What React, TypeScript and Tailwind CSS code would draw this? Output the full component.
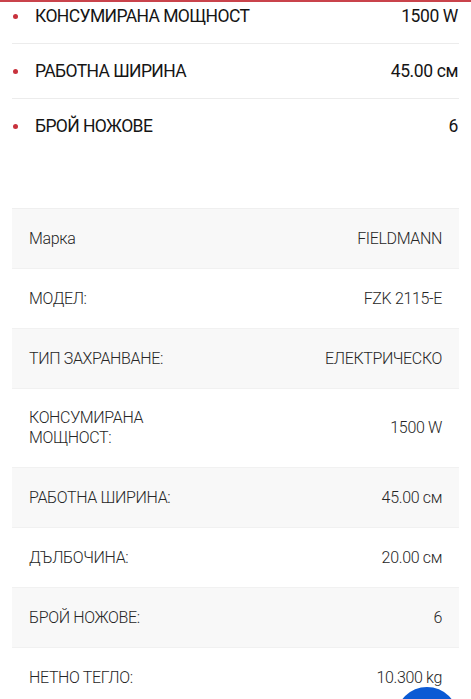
import React from 'react';

const highlights = [
  { label: 'КОНСУМИРАНА МОЩНОСТ', value: '1500 W' },
  { label: 'РАБОТНА ШИРИНА', value: '45.00 см' },
  { label: 'БРОЙ НОЖОВЕ', value: '6' },
];

const specs = [
  { label: 'Марка', value: 'FIELDMANN' },
  { label: 'МОДЕЛ:', value: 'FZK 2115-E' },
  { label: 'ТИП ЗАХРАНВАНЕ:', value: 'ЕЛЕКТРИЧЕСКО' },
  { label: 'КОНСУМИРАНА МОЩНОСТ:', value: '1500 W' },
  { label: 'РАБОТНА ШИРИНА:', value: '45.00 см' },
  { label: 'ДЪЛБОЧИНА:', value: '20.00 см' },
  { label: 'БРОЙ НОЖОВЕ:', value: '6' },
  { label: 'НЕТНО ТЕГЛО:', value: '10.300 kg' },
];

const App: React.FC = () => {
  return (
    <div className="relative h-[699px] overflow-hidden bg-white font-['Roboto',_'Noto_Sans',_sans-serif]">
      {/* header edge */}
      <div className="absolute top-0 left-0 right-0 h-[2px] bg-[#c9434b] z-10" />

      {/* Highlights list */}
      <ul className="mt-[-11px] px-3">
        {highlights.map((h, i) => (
          <li
            key={h.label}
            className={`flex items-center justify-between h-[55px] ${i < highlights.length - 1 ? 'border-b border-[#ececec]' : ''}`}
          >
            <div className="flex items-center">
              <span className="w-[5px] h-[5px] rounded-full bg-[#c8323c] ml-[1px] mr-[17px]" />
              <span className="text-[17.5px] font-normal text-[#151515] tracking-[-0.6px]">{h.label}</span>
            </div>
            <span className="text-[17.5px] font-normal text-[#151515] tracking-[-0.4px] pr-[1px]">{h.value}</span>
          </li>
        ))}
      </ul>

      {/* Spec table */}
      <div className="mx-3 mt-[54px] border-t border-[#efefef]">
        {specs.map((s, i) => (
          <div
            key={s.label}
            className={`flex items-center justify-between px-[17px] min-h-[60px] py-[19px] border-b border-[#f1f1f1] ${i % 2 === 0 ? 'bg-[#f8f8f8]' : 'bg-white'}`}
          >
            <span className="max-w-[180px] text-[16px] leading-[20px] font-light tracking-[-0.35px] text-[#262626]">{s.label}</span>
            <span className="text-[16px] leading-[20px] font-light tracking-[-0.35px] text-[#262626]">{s.value}</span>
          </div>
        ))}
      </div>

      {/* floating button */}
      <div className="absolute left-[396px] top-[687px] w-[62px] h-[62px] rounded-full bg-[#0b5ad4]" />
    </div>
  );
};

export default App;
